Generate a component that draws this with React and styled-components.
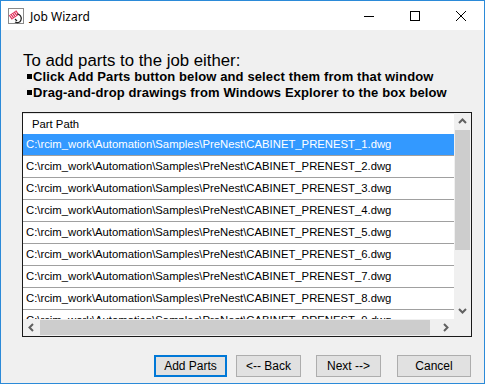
import React from "react";
import styled, { createGlobalStyle } from "styled-components";

const Global = createGlobalStyle`
  html, body { margin: 0; padding: 0; background: #f0f0f0; }
  * { box-sizing: border-box; }
`;

const Window = styled.div`
  width: 485px;
  height: 384px;
  border: 1px solid #2b8ad8;
  background: #f0f0f0;
  display: flex;
  flex-direction: column;
  font-family: "Liberation Sans", Arial, sans-serif;
  color: #000;
  overflow: hidden;
`;

const TitleBar = styled.div`
  height: 29px;
  background: #fff;
  display: flex;
  align-items: center;
  flex-shrink: 0;
`;

const AppIcon = styled.div`
  width: 16px;
  height: 16px;
  margin: 0 6px 0 7px;
  display: flex;
`;

const Title = styled.div`
  flex: 1;
  font-family: "Noto Sans", "Open Sans", sans-serif;
  font-size: 12px;
  padding-top: 1px;
`;

const Control = styled.div`
  width: 46px;
  height: 29px;
  display: flex;
  align-items: center;
  justify-content: center;
`;

const Content = styled.div`
  flex: 1;
  display: flex;
  flex-direction: column;
  padding: 22px 13px 0 21px;
`;

const Heading = styled.p`
  margin: 0 0 0 1px;
  font-size: 16.8px;
  line-height: 17px;
`;

const Bullet = styled.p`
  margin: 0 0 0 5px;
  font-size: 13px;
  font-weight: bold;
  letter-spacing: 0.12px;
  line-height: 16px;
  display: flex;
  align-items: center;
  &::before {
    content: "";
    width: 5px;
    height: 5px;
    background: #000;
    margin-right: 1px;
    margin-top: -2px;
  }
`;

const ListBox = styled.div`
  margin-top: 11px;
  width: 450px;
  height: 225px;
  border: 1px solid #1a1a1a;
  background: #fff;
  display: grid;
  grid-template-columns: 1fr 17px;
  grid-template-rows: 1fr 17px;
`;

const Viewport = styled.div`
  overflow: hidden;
  font-size: 11.3px;
`;

const Header = styled.div`
  height: 21px;
  line-height: 20px;
  padding-left: 9px;
  border-top: 1px solid #e5e5e5;
  white-space: nowrap;
`;

const Row = styled.div`
  height: 22px;
  line-height: 21px;
  padding-left: 3px;
  white-space: nowrap;
  border-bottom: 1px solid #a0a0a0;
  background: ${p => (p.selected ? "#3399ff" : "#fff")};
  color: ${p => (p.selected ? "#fff" : "#000")};
`;

const VScroll = styled.div`
  background: #f0f0f0;
  display: flex;
  flex-direction: column;
  align-items: center;
`;

const HScroll = styled.div`
  background: #f0f0f0;
  display: flex;
  align-items: center;
`;

const Arrow = styled.div`
  width: 17px;
  height: 17px;
  display: flex;
  align-items: center;
  justify-content: center;
  flex-shrink: 0;
`;

const VThumb = styled.div`
  width: 15px;
  height: 120px;
  background: #cdcdcd;
`;

const Track = styled.div`
  flex: 1;
`;

const HThumb = styled.div`
  width: 390px;
  height: 15px;
  background: #cdcdcd;
`;

const Corner = styled.div`
  background: #f0f0f0;
`;

const Footer = styled.div`
  margin-top: 18px;
  display: flex;
  justify-content: flex-end;
`;

const Button = styled.button`
  width: ${p => p.w}px;
  height: 22px;
  margin-left: ${p => p.gap}px;
  padding: 0;
  background: #e1e1e1;
  border: ${p => (p.focused ? "2px solid #0078d7" : "1px solid #adadad")};
  font-family: "Liberation Sans", Arial, sans-serif;
  font-size: 12px;
  color: #000;
`;

const Chevron = ({ dir }) => {
  const pts = {
    up: "4,9 7.5,5.5 11,9",
    down: "4,6 7.5,9.5 11,6",
    left: "9,4 5.5,7.5 9,11",
    right: "6,4 9.5,7.5 6,11"
  }[dir];
  return (
    <svg width="15" height="15" viewBox="0 0 15 15">
      <polyline points={pts} fill="none" stroke="#606060" strokeWidth="2" />
    </svg>
  );
};

const rows = [1, 2, 3, 4, 5, 6, 7, 8, 9].map(
  n => `C:\\rcim_work\\Automation\\Samples\\PreNest\\CABINET_PRENEST_${n}.dwg`
);

export default function App() {
  return (
    <>
      <Global />
      <Window>
        <TitleBar>
          <AppIcon>
            <svg width="16" height="16" viewBox="0 0 16 16">
              <rect x="0.5" y="0.5" width="15" height="15" fill="#fff" stroke="#8a8a8a" />
              <g transform="rotate(-35 6 7)">
                <rect x="1.5" y="4.5" width="9" height="5" fill="#e0305a" />
                <path d="M3 5v4M5 5v4M7 5v4M9 5v4" stroke="#fff" strokeWidth="0.8" />
              </g>
              <path d="M9 6c3 0 5 3 4 6s-4 3-6 2" fill="none" stroke="#222" strokeWidth="1.2" />
              <path d="M7 11l2 2" stroke="#222" strokeWidth="1.2" />
            </svg>
          </AppIcon>
          <Title>Job Wizard</Title>
          <Control>
            <svg width="10" height="10" viewBox="0 0 10 10">
              <line x1="0" y1="5.5" x2="10" y2="5.5" stroke="#000" strokeWidth="1" />
            </svg>
          </Control>
          <Control>
            <svg width="10" height="10" viewBox="0 0 10 10">
              <rect x="0.5" y="0.5" width="9" height="9" fill="none" stroke="#000" />
            </svg>
          </Control>
          <Control>
            <svg width="10" height="10" viewBox="0 0 10 10">
              <path d="M0 0L10 10M10 0L0 10" stroke="#000" strokeWidth="1" />
            </svg>
          </Control>
        </TitleBar>
        <Content>
          <Heading>To add parts to the job either:</Heading>
          <Bullet>Click Add Parts button below and select them from that window</Bullet>
          <Bullet>Drag-and-drop drawings from Windows Explorer to the box below</Bullet>
          <ListBox>
            <Viewport>
              <Header>Part Path</Header>
              {rows.map((r, i) => (
                <Row key={r} selected={i === 0}>
                  {r}
                </Row>
              ))}
            </Viewport>
            <VScroll>
              <Arrow>
                <Chevron dir="up" />
              </Arrow>
              <VThumb />
              <Track />
              <Arrow>
                <Chevron dir="down" />
              </Arrow>
            </VScroll>
            <HScroll>
              <Arrow>
                <Chevron dir="left" />
              </Arrow>
              <HThumb />
              <Track />
              <Arrow>
                <Chevron dir="right" />
              </Arrow>
            </HScroll>
            <Corner />
          </ListBox>
          <Footer>
            <Button w={73} gap={0} focused>
              Add Parts
            </Button>
            <Button w={65} gap={9}>
              &lt;-- Back
            </Button>
            <Button w={65} gap={15}>
              Next --&gt;
            </Button>
            <Button w={74} gap={16}>
              Cancel
            </Button>
          </Footer>
        </Content>
      </Window>
    </>
  );
}
